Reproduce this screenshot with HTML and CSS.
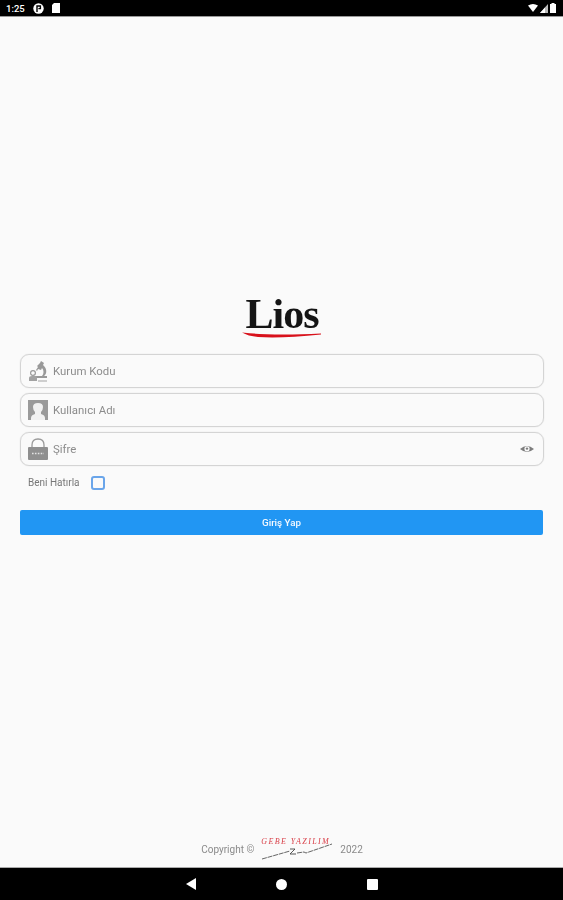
FILE: index.html
```html
<!DOCTYPE html>
<html lang="en">
<head>
  <meta charset="UTF-8">
  <meta name="viewport" content="width=device-width, initial-scale=1.0">
  <title>Lios</title>
  <link rel="stylesheet" href="styles.css">
</head>
<body>
  <div class="status-bar">
    <div class="status-left">
      <span class="clock">1:25</span>
      <svg class="status-icon" width="11" height="11" viewBox="0 0 11 11"><circle cx="5.5" cy="5.5" r="5.2" fill="#fff"/><path d="M4 9V3h3.4v2.6H5.4" fill="none" stroke="#000" stroke-width="1.4"/></svg>
      <svg class="status-icon" width="8" height="10" viewBox="0 0 8 10"><path d="M2 0h6v10H0V2z" fill="#fff"/></svg>
    </div>
    <div class="status-right">
      <svg width="10" height="8" viewBox="0 0 10 8"><path d="M0 1.5Q5-1.5 10 1.5L5 8z" fill="#fff"/></svg>
      <svg width="8" height="9" viewBox="0 0 8 9"><path d="M8 0v9H0z" fill="#bbb"/><path d="M5 3.4V9H0z" fill="#fff"/></svg>
      <svg width="6" height="10" viewBox="0 0 6 10"><path d="M1.5 1V0h3v1H6v9H0V1z" fill="#fff"/></svg>
    </div>
  </div>

  <main class="screen">
    <div class="logo">
      <span class="logo-text">Lios</span>
      <svg class="logo-line" width="80" height="6" viewBox="0 0 80 6"><path d="M0 0.5Q30 4 79 1.5L79 2.5Q40 6.5 16 5Q6 4 0 0.5z" fill="#d8111b"/></svg>
    </div>

    <form class="login-form">
      <label class="field">
        <svg class="field-icon" width="20" height="22" viewBox="0 0 20 22">
          <path d="M13 1l3 2-1 2 1 1c3 3 3 8 0 10h3v2H7v-2h7c2-2 2-6 0-8l-1 2-3-1-1 2-1-1 2-3-1-1 3-3z" fill="#999"/>
          <circle cx="5" cy="13" r="2.4" fill="none" stroke="#999" stroke-width="1.2"/>
          <path d="M1 21v-3q0-2 3-2h3q2 0 2 2v3z" fill="#a2a2a2"/>
          <path d="M10 21h9" stroke="#a2a2a2"/>
        </svg>
        <input class="field-input" type="text" placeholder="Kurum Kodu">
      </label>
      <label class="field">
        <svg class="field-icon" width="20" height="20" viewBox="0 0 20 20">
          <rect width="20" height="20" fill="#9a9a9a"/>
          <path d="M3 20v-2q0-3 4-4v-2q-2-2-2-5 0-4 5-4t5 4q0 3-2 5v2q4 1 4 4v2z" fill="#f1f1f1"/>
        </svg>
        <input class="field-input" type="text" placeholder="Kullanıcı Adı">
      </label>
      <label class="field">
        <svg class="field-icon" width="20" height="22" viewBox="0 0 20 22">
          <path d="M4 10V7q0-6 6-6t6 6v3" fill="none" stroke="#9a9a9a" stroke-width="1.3"/>
          <rect y="9" width="20" height="13" rx="1" fill="#8f8f8f"/>
          <path d="M4 15.5h12" stroke="#e4e4e4" stroke-width="1.4" stroke-dasharray="1.6 1.3"/>
        </svg>
        <input class="field-input" type="text" placeholder="Şifre">
        <svg class="eye" width="14" height="9" viewBox="0 0 14 9">
          <path d="M0 4Q7-2 14 4Q7 10 0 4z" fill="#7d7d7d"/>
          <circle cx="7" cy="3.8" r="2.6" fill="#fafafa"/>
          <circle cx="7" cy="3.6" r="1.2" fill="#7d7d7d"/>
        </svg>
      </label>

      <label class="remember">
        <span>Beni Hatırla</span>
        <span class="check"></span>
      </label>

      <button class="login-btn" type="button">Giriş Yap</button>
    </form>

    <footer class="copyright">
      <span>Copyright ©</span>
      <span class="brand">
        <span class="brand-name">GEBE YAZILIM</span>
        <svg class="brand-line" width="72" height="17" viewBox="0 0 72 17"><path d="M1 16L29 8M36 10l7-1 2 1L71 1" fill="none" stroke="#555" stroke-width=".9" stroke-dasharray="5 .8"/><path d="M29 6h5l-5 5h6" fill="none" stroke="#444" stroke-width=".9"/></svg>
      </span>
      <span>2022</span>
    </footer>
  </main>

  <div class="nav-bar">
    <svg width="10" height="12" viewBox="0 0 10 12"><path d="M10 0v12L0 6z" fill="#fff"/></svg>
    <svg width="11" height="11" viewBox="0 0 11 11"><circle cx="5.5" cy="5.5" r="5.5" fill="#fff"/></svg>
    <svg width="11" height="11" viewBox="0 0 11 11"><rect width="11" height="11" rx="1" fill="#fff"/></svg>
  </div>
</body>
</html>
```

FILE: styles.css
```css
body {
  margin: 0;
  height: 900px;
  display: flex;
  flex-direction: column;
  overflow: hidden;
  font-family: Roboto, Arial, sans-serif;
  background-color: #fafafa;
  color: #777;
}
.status-bar {
  height: 16px;
  flex: none;
  display: flex;
  justify-content: space-between;
  align-items: center;
  padding: 0 6px;
  background-color: #000;
  border-bottom: 1px solid #999;
}
.status-left, .status-right {
  display: flex;
  align-items: center;
}
.status-left {
  gap: 8px;
}
.status-right {
  gap: 2px;
  padding-right: 1px;
}
.clock {
  font-size: 9.5px;
  font-weight: 500;
  color: #fff;
}
.screen {
  flex: 1;
  display: flex;
  flex-direction: column;
  padding: 0 19px 0 20px;
  filter: blur(0.4px);
}
.logo {
  margin-top: 277px;
  height: 60px;
  display: flex;
  flex-direction: column;
  align-items: center;
}
.logo-text {
  font-family: "Liberation Serif", serif;
  font-size: 42px;
  font-weight: bold;
  line-height: 40px;
  letter-spacing: -1px;
  color: #151515;
}
.logo-line {
  margin-top: -2px;
}
.login-form {
  display: flex;
  flex-direction: column;
  gap: 5px;
}
.field {
  height: 32px;
  display: flex;
  align-items: center;
  gap: 5px;
  padding: 0 9px 0 7px;
  border: 1px solid #d4d4d4;
  border-radius: 9px;
  box-shadow: 0 0 1px #ccc;
}
.field-icon {
  flex: none;
}
.field-input {
  flex: 1;
  min-width: 0;
  padding: 0;
  border: none;
  outline: none;
  background: transparent;
  font-family: inherit;
  font-size: 11.4px;
}
.field-input::placeholder {
  color: #8c8c8c;
}
.remember {
  height: 23px;
  display: flex;
  align-items: center;
  gap: 11px;
  padding-left: 8px;
  font-size: 10px;
  color: #777;
}
.check {
  width: 10px;
  height: 10px;
  border: 2px solid #6aa5ea;
  border-radius: 3px;
}
.login-btn {
  height: 25px;
  margin: 11px 1px 0 0;
  padding: 0;
  border: none;
  border-radius: 2px;
  background-color: #2196f3;
  color: #f4f9ff;
  font-family: inherit;
  font-size: 9.8px;
  font-weight: 500;
}
.copyright {
  margin-top: auto;
  height: 36px;
  display: flex;
  justify-content: center;
  align-items: center;
  gap: 7px;
  font-size: 10px;
  color: #8a8a8a;
}
.brand {
  width: 72px;
  height: 28px;
  display: flex;
  flex-direction: column;
  margin-top: 5px;
}
.brand-name {
  font-family: "Liberation Serif", serif;
  font-style: italic;
  font-size: 8px;
  line-height: 8px;
  letter-spacing: 1.4px;
  white-space: nowrap;
  color: #d9414a;
}
.brand-line {
  margin-top: -3px;
}
.nav-bar {
  height: 32px;
  flex: none;
  display: flex;
  justify-content: center;
  align-items: center;
  gap: 80px;
  background-color: #000;
  border-top: 1px solid #aaa;
}
```
